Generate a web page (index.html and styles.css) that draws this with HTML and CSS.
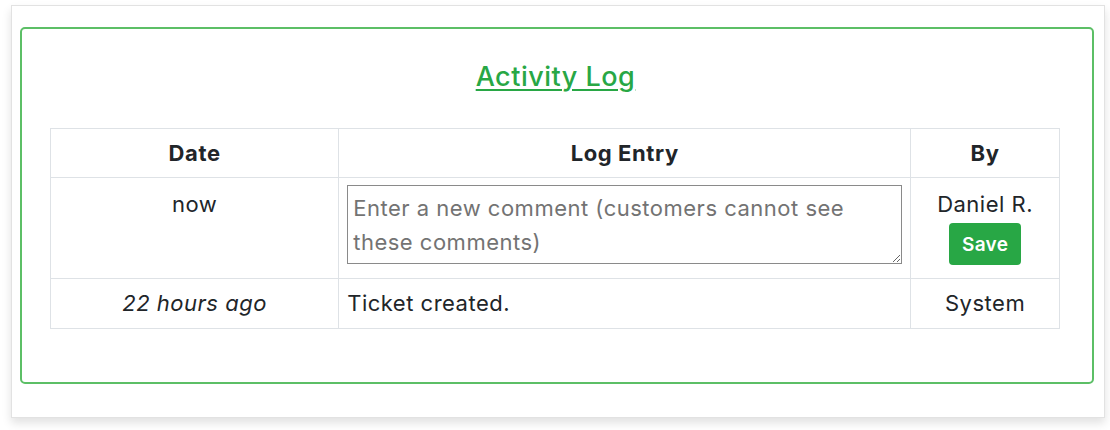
FILE: index.html
```html
<!DOCTYPE html>
<html lang="en">
<head>
<meta charset="utf-8">
<title>Activity Log</title>
<link rel="stylesheet" href="styles.css">
</head>
<body>
<div class="frame">
  <section class="log-box">
    <h2 class="log-title"><a href="#">Activity Log</a></h2>
    <table class="log-table">
      <colgroup>
        <col class="col-date">
        <col class="col-entry">
        <col class="col-by">
      </colgroup>
      <thead>
        <tr>
          <th>Date</th>
          <th>Log Entry</th>
          <th>By</th>
        </tr>
      </thead>
      <tbody>
        <tr class="new-row">
          <td class="cell-center">now</td>
          <td class="cell-entry"><textarea class="comment" placeholder="Enter a new comment (customers cannot see these comments)"></textarea></td>
          <td class="cell-center">Daniel R.<button class="save-btn" type="button">Save</button></td>
        </tr>
        <tr>
          <td class="cell-center cell-date"><em>22 hours ago</em></td>
          <td class="cell-text">Ticket created.</td>
          <td class="cell-center">System</td>
        </tr>
      </tbody>
    </table>
  </section>
</div>
</body>
</html>
```

FILE: styles.css
```css
* { box-sizing: border-box; }
html, body { margin: 0; padding: 0; background: #ffffff; }
body {
  font-family: Inter, "Liberation Sans", Arial, sans-serif;
  color: #212529;
  padding: 5px 5px 12px 11px;
}
.frame {
  width: 1094px;
  height: 413px;
  border: 1px solid #e2e2e2;
  background: #fff;
  box-shadow: 0 5px 9px rgba(0, 0, 0, 0.12);
  padding: 21px 10px 0 8px;
}
.log-box {
  border: 2px solid #5cbf66;
  border-radius: 5px;
  height: 357px;
  padding: 32px 31px 0 28px;
}
.log-title {
  margin: 0 0 35px;
  text-align: center;
  font-weight: 500;
  font-size: 27px;
  line-height: 32px;
  letter-spacing: 0.5px;
}
.log-title a { color: #28a745; text-decoration: underline; text-underline-offset: 3px; text-decoration-thickness: 2px; }
.log-table {
  width: 1010px;
  border-collapse: collapse;
  font-size: 22px;
  letter-spacing: 0.5px;
}
.col-date { width: 289px; }
.col-entry { width: 572px; }
.col-by { width: 149px; }
.log-table th, .log-table td {
  border: 1px solid #dee2e6;
  vertical-align: top;
}
.log-table th {
  font-weight: 700;
  font-size: 22px;
  line-height: 28px;
  letter-spacing: 0.6px;
  padding: 10px 8px;
  text-align: center;
}
.log-table td { line-height: 28px; padding: 10px 8px 11px; }
.cell-center { text-align: center; }
.new-row td { padding: 12px 8px 13px; }
.new-row td.cell-entry { padding: 7px 8px 13px; }
.comment {
  display: block;
  width: 555px;
  height: 79px;
  border: 1px solid #8a8a8a;
  border-radius: 0;
  padding: 5px 5px 4px;
  font-family: inherit;
  font-size: 22px;
  letter-spacing: 0.5px;
  line-height: 34px;
  resize: vertical;
  color: #212529;
}
.comment::placeholder { color: #737373; }
.save-btn {
  display: block;
  margin: 5px auto 0;
  width: 72px;
  height: 42px;
  border: none;
  border-radius: 4px;
  background: #28a745;
  color: #fff;
  font-family: inherit;
  font-weight: 600;
  font-size: 19px;
  letter-spacing: 0.3px;
  cursor: pointer;
}
.cell-text { text-align: left; padding-left: 9px; }
```
